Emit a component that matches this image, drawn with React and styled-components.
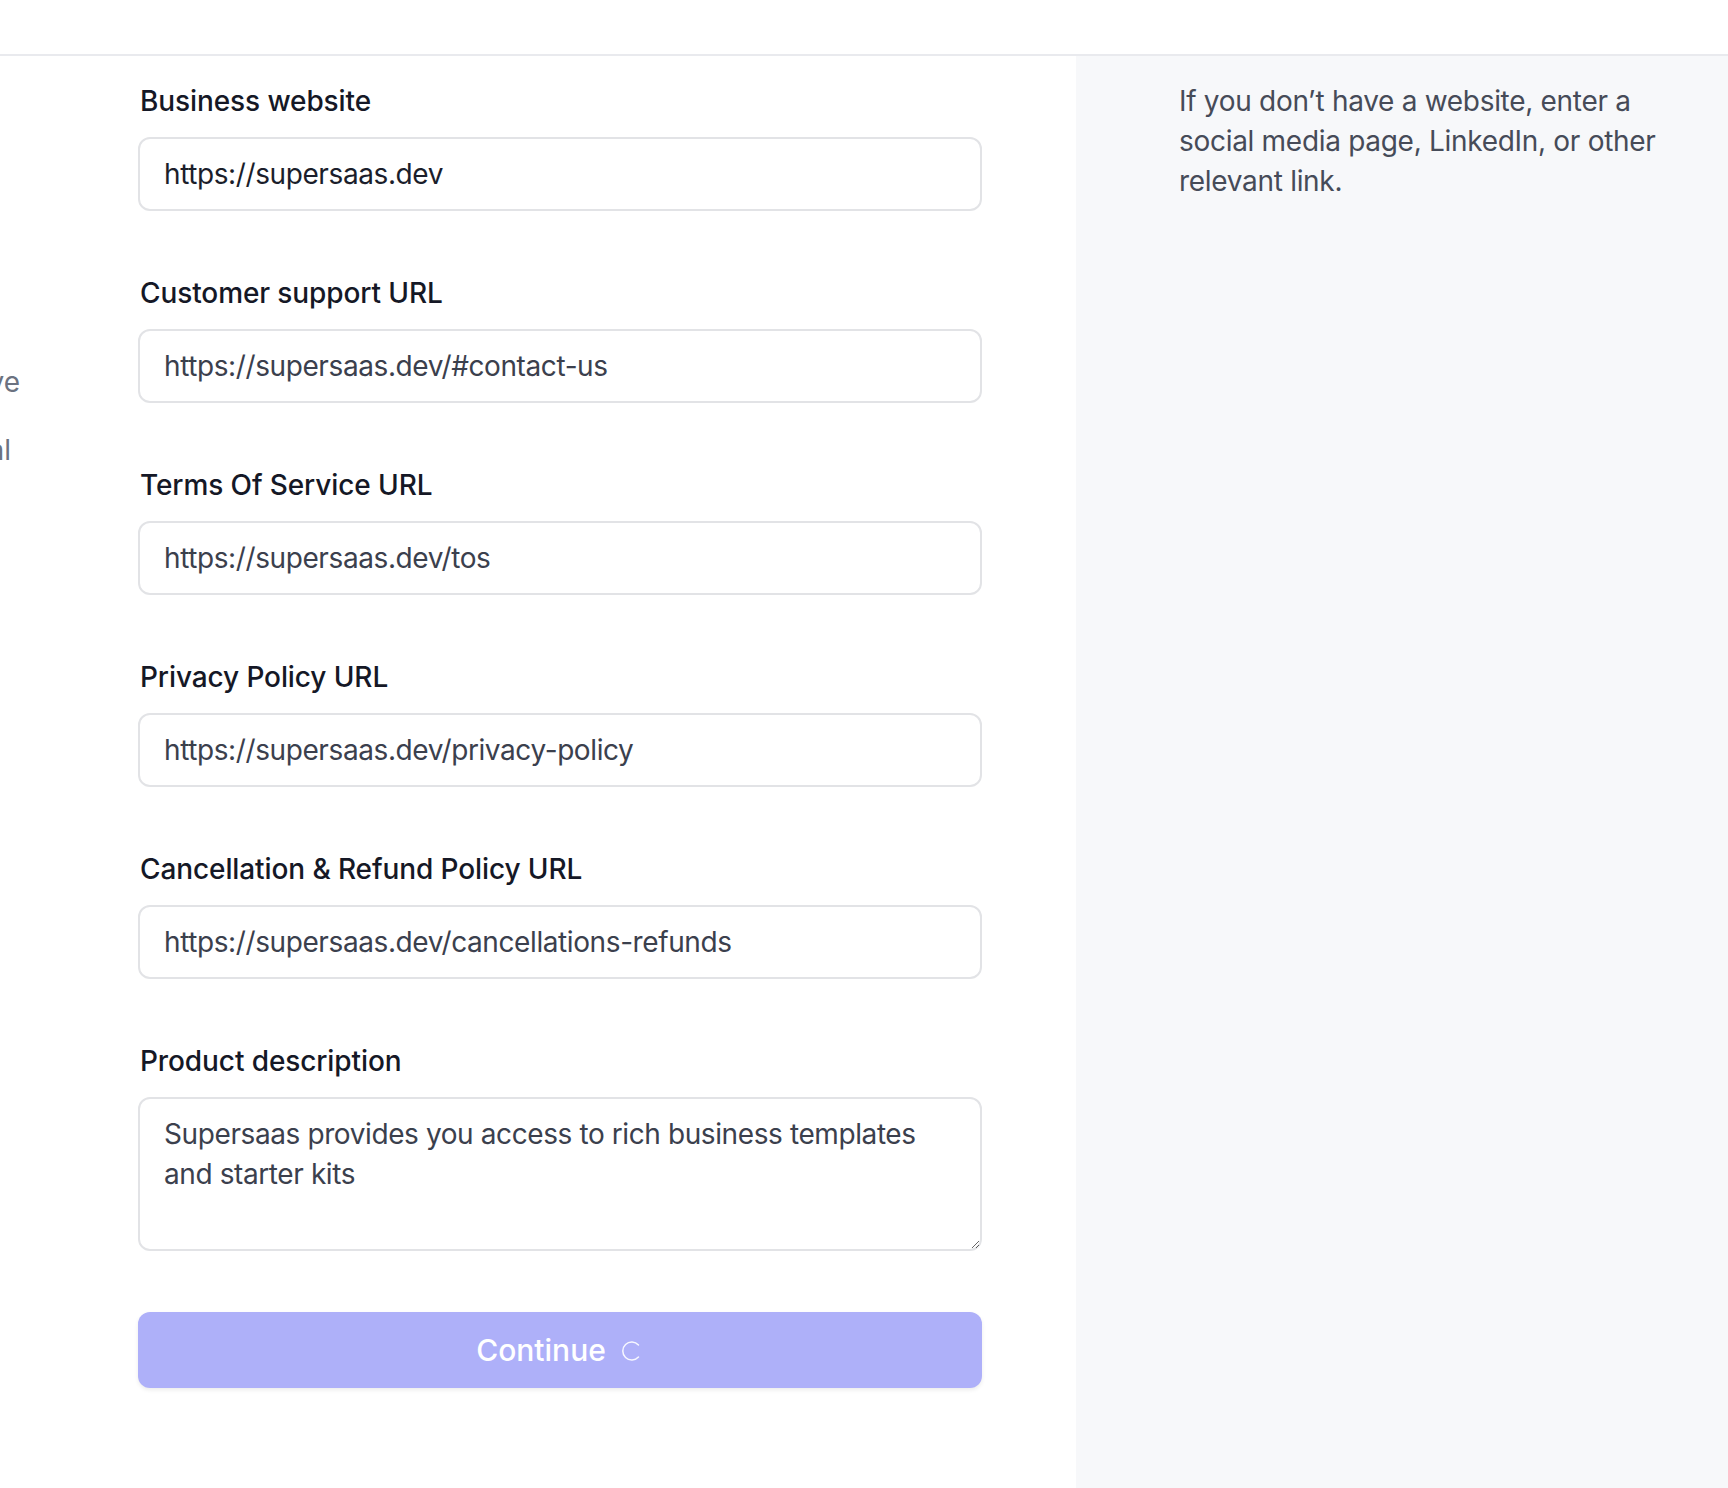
import React from "react";
import styled, { createGlobalStyle } from "styled-components";

const Global = createGlobalStyle`
  html, body { margin: 0; padding: 0; background: #ffffff; }
  body { font-family: Inter, "Noto Sans", "Liberation Sans", sans-serif; -webkit-font-smoothing: antialiased; }
  * { box-sizing: border-box; }
`;

const Page = styled.div`
  min-height: 100vh;
  display: flex;
  flex-direction: column;
`;

const TopBar = styled.header`
  height: 56px;
  flex-shrink: 0;
  border-bottom: 2px solid #e9eaee;
  background: #ffffff;
`;

const Main = styled.main`
  flex: 1;
  display: flex;
  align-items: stretch;
`;

const Sidebar = styled.nav`
  width: 24px;
  flex-shrink: 0;
  overflow: hidden;
  padding-top: 306px;
  display: flex;
  flex-direction: column;
  gap: 28px;
`;

const NavItem = styled.div`
  display: flex;
  justify-content: flex-end;
  padding-right: ${(p) => p.$inset}px;
  white-space: nowrap;
  font-size: 28px;
  line-height: 40px;
  color: #6b7280;
`;

const FormArea = styled.section`
  flex: 1;
  padding: 25px 94px 80px 114px;
`;

const Form = styled.form`
  display: flex;
  flex-direction: column;
  gap: 62px;
`;

const Field = styled.div`
  display: flex;
  flex-direction: column;
  gap: 16px;
`;

const Label = styled.label`
  font-size: 28px;
  line-height: 40px;
  font-weight: 500;
  letter-spacing: -0.1px;
  color: #151826;
  padding-left: 2px;
`;

const fieldBase = `
  width: 100%;
  font-family: Inter, "Noto Sans", "Liberation Sans", sans-serif;
  font-size: 28px;
  line-height: 40px;
  letter-spacing: -0.4px;
  border: 2px solid #e2e3e6;
  border-radius: 12px;
  background: #ffffff;
  padding: 15px 24px;
  outline: none;
`;

const TextInput = styled.input`
  ${fieldBase}
  height: 74px;
  color: ${(p) => (p.$strong ? "#1b1e2b" : "#3b404d")};
`;

const TextArea = styled.textarea`
  ${fieldBase}
  height: 154px;
  color: #3b404d;
  resize: vertical;
  display: block;
`;

const SubmitButton = styled.button`
  margin-top: -1px;
  height: 76px;
  width: 100%;
  border: none;
  border-radius: 12px;
  background: #aeb0f9;
  box-shadow: 0 2px 4px rgba(0, 0, 0, 0.08);
  color: #ffffff;
  font-family: Inter, "Noto Sans", "Liberation Sans", sans-serif;
  font-size: 30px;
  font-weight: 500;
  display: flex;
  align-items: center;
  justify-content: center;
  gap: 14px;
  cursor: not-allowed;
`;

const Spinner = styled.svg`
  width: 24px;
  height: 24px;
  margin-top: 2px;
`;

const Aside = styled.aside`
  width: 652px;
  flex-shrink: 0;
  background: #f7f8fa;
  padding: 25px 49px 0 103px;
`;

const HelpText = styled.p`
  margin: 0;
  font-size: 28px;
  line-height: 40px;
  letter-spacing: -0.3px;
  color: #464b58;
`;

const fields = [
  { label: "Business website", value: "https://supersaas.dev", strong: true },
  { label: "Customer support URL", value: "https://supersaas.dev/#contact-us" },
  { label: "Terms Of Service URL", value: "https://supersaas.dev/tos" },
  { label: "Privacy Policy URL", value: "https://supersaas.dev/privacy-policy" },
  {
    label: "Cancellation & Refund Policy URL",
    value: "https://supersaas.dev/cancellations-refunds",
  },
];

export default function App() {
  return (
    <Page>
      <Global />
      <TopBar />
      <Main>
        <Sidebar>
          <NavItem $inset={4}>Go live</NavItem>
          <NavItem $inset={13}>Legal</NavItem>
        </Sidebar>
        <FormArea>
          <Form onSubmit={(e) => e.preventDefault()}>
            {fields.map((f) => (
              <Field key={f.label}>
                <Label>{f.label}</Label>
                <TextInput $strong={f.strong} defaultValue={f.value} />
              </Field>
            ))}
            <Field>
              <Label>Product description</Label>
              <TextArea
                rows={3}
                defaultValue="Supersaas provides you access to rich business templates and starter kits"
              />
            </Field>
            <SubmitButton type="submit">
              Continue
              <Spinner viewBox="0 0 24 24" fill="none">
                <path
                  d="M18.5 6A9 9 0 1 0 18.5 18"
                  stroke="#ffffff"
                  strokeWidth="1.5"
                  strokeLinecap="round"
                  opacity="0.9"
                />
              </Spinner>
            </SubmitButton>
          </Form>
        </FormArea>
        <Aside>
          <HelpText>
            If you don’t have a website, enter a social media page, LinkedIn, or
            other relevant link.
          </HelpText>
        </Aside>
      </Main>
    </Page>
  );
}
